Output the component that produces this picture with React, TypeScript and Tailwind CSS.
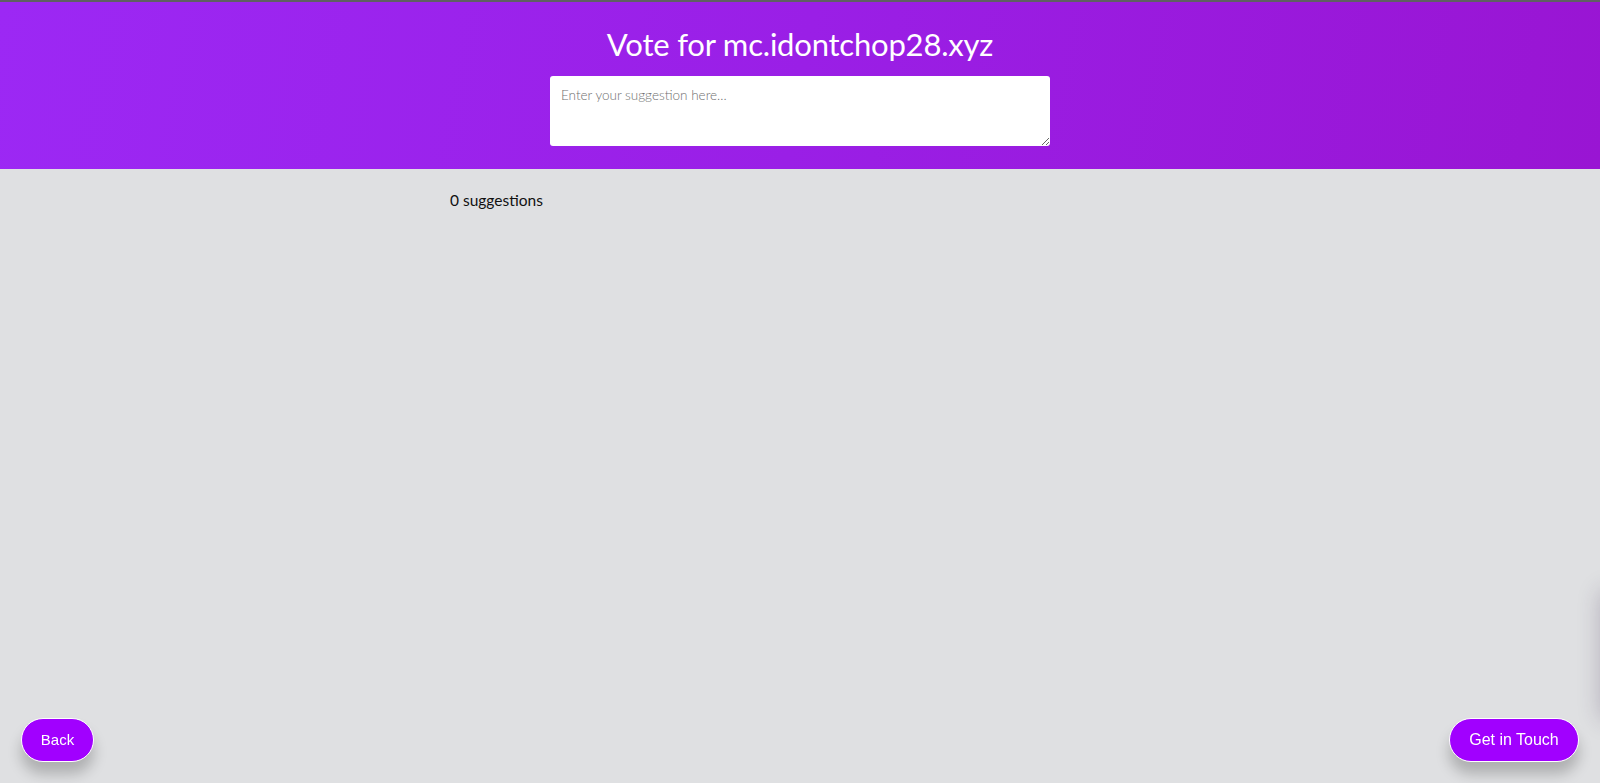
import React from "react";

export default function App() {
  return (
    <div className="relative min-h-[783px] w-full overflow-hidden bg-[#dfe0e2] font-['Lato','Noto_Sans',sans-serif]">
      <div className="h-[2px] w-full bg-[#5f5f62]" />
      <header className="flex h-[167px] w-full flex-col items-center bg-[linear-gradient(100deg,#9c28f4_0%,#9a1fe6_50%,#9915d3_100%)]">
        <h1 className="mt-[20px] text-[31px] leading-[44px] tracking-[-0.2px] text-white">
          Vote for mc.idontchop28.xyz
        </h1>
        <textarea
          className="mt-[10px] h-[70px] w-[500px] resize-y rounded-[3px] bg-white px-[11px] py-[9px] text-[13.5px] text-[#333] placeholder:text-[#6f6f6f] outline-none font-['Lato',sans-serif] font-light"
          placeholder="Enter your suggestion here..."
        />
      </header>
      <main className="mx-auto w-[700px] pt-[20px]">
        <p className="text-[15.5px] leading-[22px] text-[#111]">0 suggestions</p>
      </main>
      <button className="fixed bottom-[21px] left-[21px] h-[44px] w-[73px] rounded-full border border-white bg-[#a100ff] font-['Liberation_Sans',Arial,sans-serif] text-[15px] text-white shadow-[0_12px_14px_rgba(0,0,0,0.22)]">
        Back
      </button>
      <button className="fixed bottom-[21px] right-[21px] h-[44px] w-[130px] rounded-full border border-white bg-[#a100ff] font-['Liberation_Sans',Arial,sans-serif] text-[16px] text-white shadow-[0_12px_14px_rgba(0,0,0,0.22)]">
        Get in Touch
      </button>
      <div className="absolute right-[-40px] top-[590px] h-[130px] w-[40px] rounded-[8px] shadow-[0_0_22px_rgba(60,40,80,0.25)]" />
    </div>
  );
}
